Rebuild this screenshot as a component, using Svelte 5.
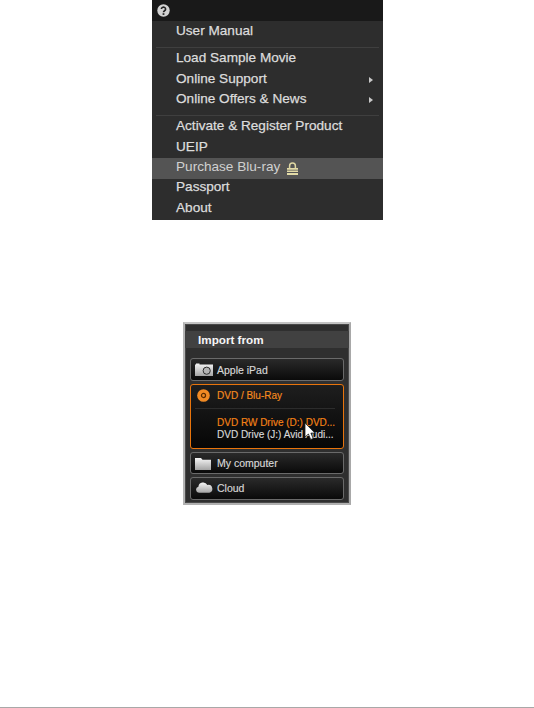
<script>
	const topItems = [
		{ label: 'Load Sample Movie' },
		{ label: 'Online Support', sub: true },
		{ label: 'Online Offers & News', sub: true }
	];
	const bottomItems = [
		{ label: 'Activate & Register Product' },
		{ label: 'UEIP' },
		{ label: 'Purchase Blu-ray', active: true, locked: true },
		{ label: 'Passport' },
		{ label: 'About' }
	];
</script>

{#snippet row(item)}
	<div class="row" class:active={item.active}>
		<span>{item.label}</span>
		{#if item.locked}
			<svg width="11" height="13" viewBox="0 0 11 13">
				<path d="M2.6 6V4a2.9 2.9 0 0 1 5.8 0V6" fill="none" stroke="#ded6a2" stroke-width="1.5" />
				<path d="M0 6h11v1.7H0zM0 8.4h11v1.7H0zM0 10.9h11V13H0z" fill="#e2daa6" />
			</svg>
		{/if}
		{#if item.sub}
			<i class="arrow"></i>
		{/if}
	</div>
{/snippet}

<div class="page">
	<div class="menu">
		<div class="menu-head">
			<svg width="13" height="13" viewBox="0 0 13 13">
				<circle cx="6.5" cy="6.5" r="6.2" fill="#d2d2d2" />
				<path d="M4.4 5.1a2.1 2 0 1 1 3.2 1.7c-.8.5-1.1.8-1.1 1.5" fill="none" stroke="#222" stroke-width="1.6" />
				<rect x="5.6" y="9.2" width="1.8" height="1.7" fill="#222" />
			</svg>
		</div>
		<div class="group first">
			<div class="row"><span>User Manual</span></div>
		</div>
		<div class="group">
			{#each topItems as item}
				{@render row(item)}
			{/each}
		</div>
		<div class="group last">
			{#each bottomItems as item}
				{@render row(item)}
			{/each}
		</div>
	</div>

	<div class="panel">
		<div class="panel-title">Import from</div>
		<div class="sources">
			<div class="source">
				<span class="slot">
					<svg width="18" height="13" viewBox="0 0 18 13">
						<defs>
							<linearGradient id="silver" x1="0" y1="0" x2="0" y2="1">
								<stop offset="0" stop-color="#f6f6f6" />
								<stop offset="1" stop-color="#a4a4a4" />
							</linearGradient>
						</defs>
						<path d="M0 1.5h1v-1h3.5v1H18V13H0z" fill="url(#silver)" />
						<circle cx="11.7" cy="7.7" r="3.6" fill="#b4b4b4" stroke="#2e2e2e" stroke-width="1" />
					</svg>
				</span>
				<span>Apple iPad</span>
			</div>
			<div class="source open">
				<div class="open-head">
					<span class="slot disc">
						<svg width="13" height="13" viewBox="0 0 14 14">
							<circle cx="7" cy="7" r="6.8" fill="#f08a24" />
							<circle cx="7" cy="7" r="2.2" fill="none" stroke="#5a2c00" stroke-width="1.3" />
						</svg>
					</span>
					<span>DVD / Blu-Ray</span>
				</div>
				<div class="drives">
					<div class="drive current">DVD RW Drive (D:) DVD...</div>
					<div class="drive">DVD Drive (J:) Avid Audi...</div>
				</div>
				<svg class="cursor" width="13" height="19" viewBox="0 0 13 19">
					<path d="M1 1v14l3.4-3 2.3 5.5 2.5-1-2.3-5.4H11z" fill="#fff" stroke="#222" stroke-width=".8" />
				</svg>
			</div>
			<div class="source short">
				<span class="slot">
					<svg width="16" height="13" viewBox="0 0 16 13">
						<path d="M0 1h6l1.5 1.8H16V13H0z" fill="url(#silver)" />
					</svg>
				</span>
				<span>My computer</span>
			</div>
			<div class="source last-source">
				<span class="slot">
					<svg width="18" height="11" viewBox="0 0 18 11">
						<path d="M4 10.8a3.1 3.1 0 0 1-.6-6.1A4.8 4.8 0 0 1 12.4 3a3.5 3.5 0 0 1 1.8 7.8z" fill="url(#silver)" />
					</svg>
				</span>
				<span>Cloud</span>
			</div>
		</div>
	</div>

	<div class="page-rule"></div>
</div>

<style>
	:global(body) {
		background: #fff;
	}

	.page {
		display: flex;
		flex-direction: column;
		height: 708px;
		overflow: hidden;
		font-family: "Liberation Sans", Arial, sans-serif;
	}

	.menu {
		width: 231px;
		height: 220px;
		margin-left: 152px;
		background: #2d2d2d;
		color: #dcdcdc;
		font-size: 13.6px;
		-webkit-text-stroke: 0.25px #dcdcdc;
	}

	.menu-head {
		display: flex;
		align-items: center;
		height: 21px;
		padding-left: 5px;
		box-sizing: border-box;
		background: #191919;
	}

	.group {
		margin: -0.5px 4px 0;
		padding: 0 0 6.5px;
		border-bottom: 1px solid #3f3f3f;
	}

	.group.first {
		margin-top: -1px;
		padding-bottom: 7px;
	}

	.group.last {
		border-bottom: 0;
	}

	.row {
		display: flex;
		align-items: center;
		gap: 7px;
		height: 20.3px;
		padding-left: 20px;
		position: relative;
	}

	.row.active {
		top: 2px;
		margin: 0 -4px;
		padding-left: 24px;
		background: #545454;
		color: #d0d0d0;
		-webkit-text-stroke: 0;
	}

	.row.active span {
		position: relative;
		top: -2px;
	}

	.arrow {
		position: absolute;
		right: 6px;
		top: 9px;
		border-left: 4px solid #c8c8c8;
		border-top: 3.5px solid transparent;
		border-bottom: 3.5px solid transparent;
	}

	.panel {
		width: 168px;
		height: 183px;
		box-sizing: border-box;
		margin: 102px 0 0 183px;
		background: #2f2f2f;
		border: 2px solid #b8b8b8;
		border-color: #c4c4c4 #a8a8a8 #b0b0b0 #b4b4b4;
		box-shadow: inset 0 0 0 1px #4a4a4a;
	}

	.panel-title {
		margin-top: 7px;
		height: 17px;
		line-height: 17px;
		padding-left: 13px;
		background: #414141;
		color: #f6f6f6;
		font-size: 11.7px;
		font-weight: 700;
	}

	.sources {
		display: flex;
		flex-direction: column;
		gap: 3px;
		margin: 10px 5px 0;
	}

	.source {
		display: flex;
		align-items: center;
		height: 23px;
		box-sizing: border-box;
		padding-left: 4px;
		border: 1px solid #6a6a6a;
		border-radius: 3px;
		background: linear-gradient(#2a2a2a, #0a0a0a);
		color: #d8d8d8;
		font-size: 10.5px;
		-webkit-text-stroke: 0.15px currentColor;
	}

	.source.short {
		height: 22px;
	}

	.source.last-source {
		padding-bottom: 2px;
	}

	.slot {
		display: flex;
		align-items: center;
		flex: none;
		width: 22px;
	}

	.source.open {
		position: relative;
		display: block;
		height: 65px;
		padding: 0 0 0 4px;
		border-color: #e8740c;
		background: linear-gradient(#1e1e1e, #060606);
		color: #f58a1e;
		font-size: 10px;
	}

	.open-head {
		display: flex;
		align-items: center;
		height: 21px;
		padding-bottom: 2px;
		margin-right: 8px;
		border-bottom: 1px solid #2c2c2c;
	}

	.slot.disc {
		box-sizing: border-box;
		padding-left: 2px;
	}

	.drives {
		margin: 8px 0 0 22px;
		font-size: 10px;
		line-height: 12px;
		white-space: nowrap;
	}

	.current {
		color: #f58216;
	}

	.drive:not(.current) {
		color: #d8d8d8;
	}

	.cursor {
		position: absolute;
		left: 113px;
		top: 37px;
	}

	.page-rule {
		margin-top: auto;
		height: 1px;
		background: #a8a8a8;
	}
</style>
